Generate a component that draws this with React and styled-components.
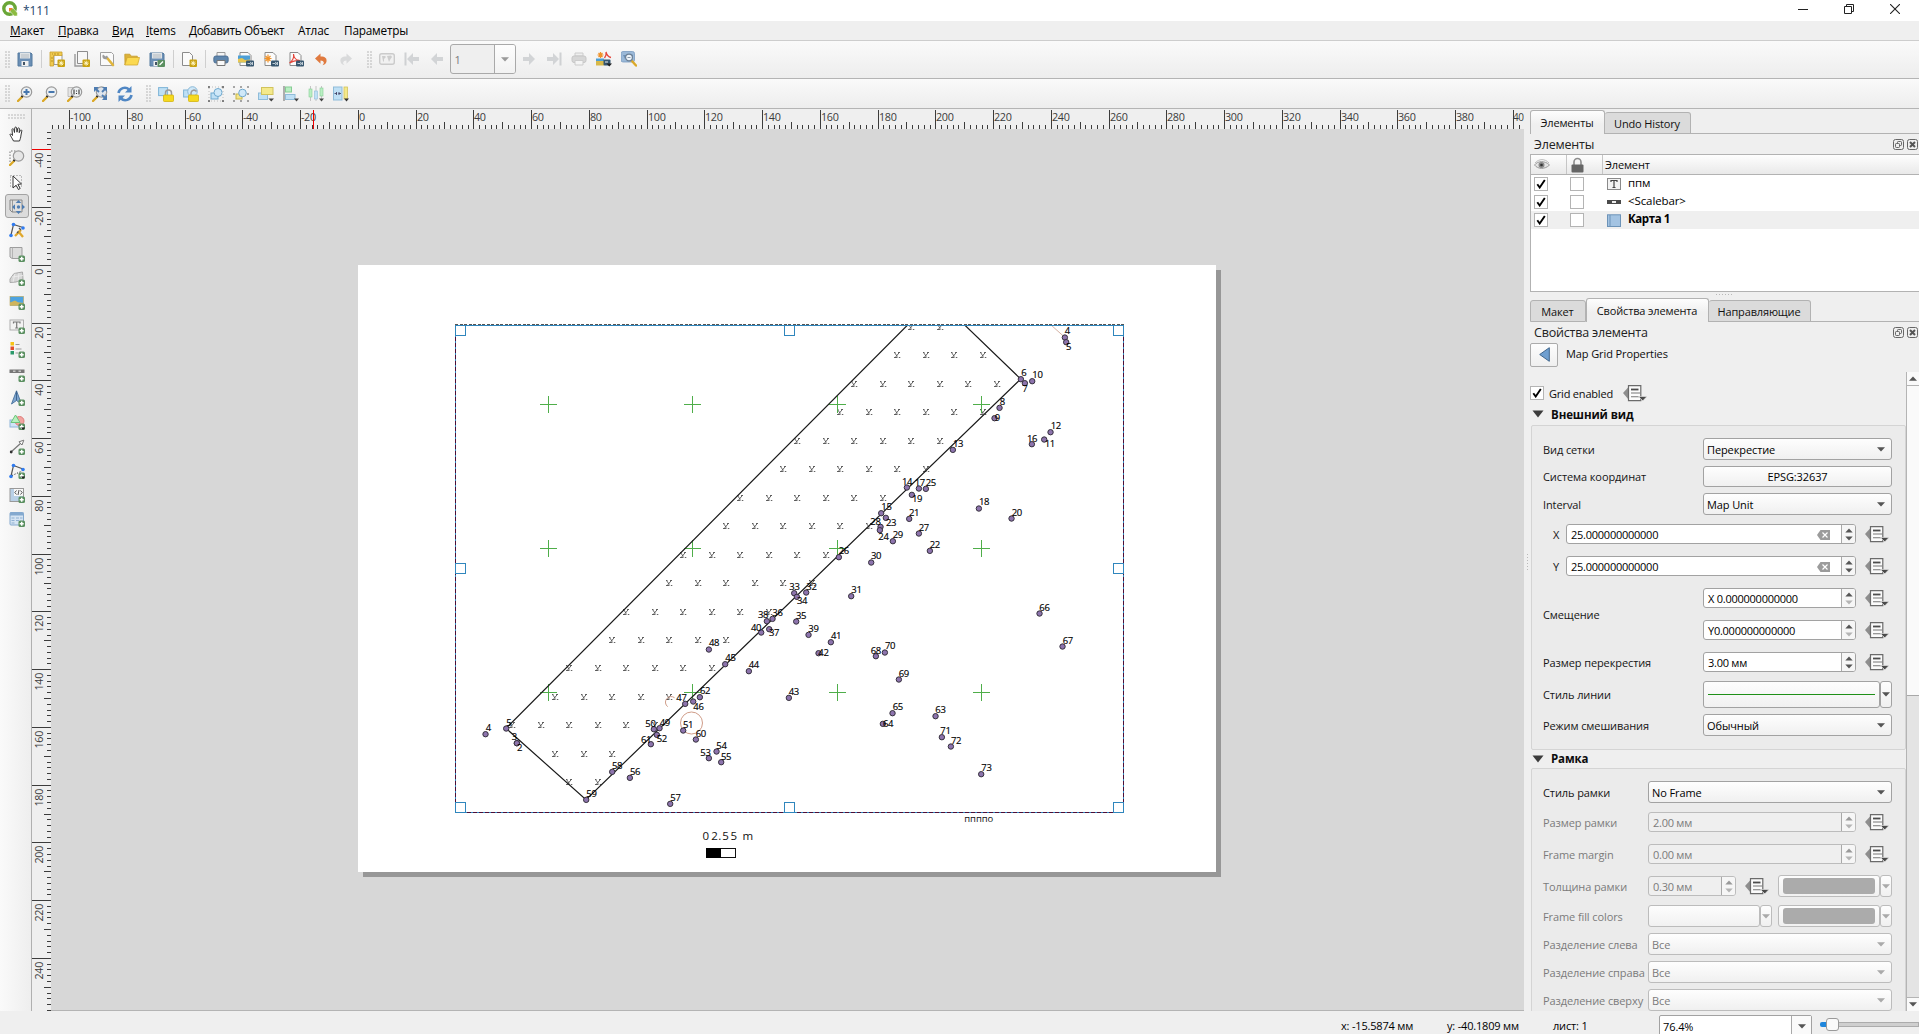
import React from "react";
import styled, { createGlobalStyle, css } from "styled-components";

const Global = createGlobalStyle`
  * { box-sizing: border-box; }
  html, body { margin: 0; padding: 0; overflow: hidden; background: #efefef; }
  body { font-family: "Open Sans", "Noto Sans", sans-serif; font-size: 11px; letter-spacing: -0.1px; color: #0c0c0c; }
  svg { display: block; flex: none; }
`;

/* ---------- window frame ---------- */
const Window = styled.div`
  width: 1919px; height: 1034px; display: flex; flex-direction: column; overflow: hidden; background: #efefef;
`;
const TitleBar = styled.header`
  height: 21px; flex: none; display: flex; align-items: flex-start; background: #fff; padding-left: 2px;
`;
const TitleText = styled.span`
  flex: 1; margin-left: 5px; font-size: 12px; line-height: 16px; padding-top: 3px; letter-spacing: -0.1px; color: #24466a;
`;
const Caption = styled.div`
  display: flex; gap: 0; padding-right: 1px;
`;
const CaptionButton = styled.div`
  width: 46px; height: 17px; display: flex; align-items: center; justify-content: center;
`;
const MenuBar = styled.nav`
  height: 20px; flex: none; display: flex; padding-left: 10px; gap: 14px; border-bottom: 1px solid #cdcdcd;
  font-size: 11.8px; line-height: 19px; letter-spacing: -0.15px; color: #000;
`;
const MenuItem = styled.span`
  width: ${(p) => p.$w}px; white-space: nowrap; letter-spacing: ${(p) => p.$ls ?? -0.2}px;
  &::first-letter { text-decoration: ${(p) => (p.$u ? "underline" : "none")}; }
`;
const ToolBar = styled.div`
  height: ${(p) => p.$h}px; flex: none; display: flex; align-items: center; padding: 0 0 ${(p) => p.$pb || 0}px 4px;
  background: linear-gradient(#fafafa, #ededed); border-bottom: 1px solid #b4b4b4;
`;
const Tool = styled.div`
  width: 25px; height: 24px; display: flex; align-items: center; justify-content: center;
`;
const Separator = styled.div`
  width: 7px; height: 18px; display: flex; justify-content: center;
  &::before { content: ""; width: 1px; background: #cfcfcf; }
`;
const Grip = styled.div`
  width: ${(p) => p.$w}px; height: 17px; flex: none; display: flex; justify-content: ${(p) => (p.$end ? "center" : "flex-start")};
  padding-left: ${(p) => (p.$end ? 5 : 1)}px;
  &::before {
    content: ""; width: 5px;
    background: radial-gradient(circle at 1px 1px, #c6c6c6 0.6px, transparent 0.9px) 0 0 / 3px 3px;
  }
`;
const PageCombo = styled.div`
  width: 66px; height: 30px; margin-right: 1px; display: flex; border: 1px solid #a9a9a9; border-radius: 3px; overflow: hidden;
  background: #efefef; color: #7a7a7a; font-size: 11px; line-height: 30px;
`;
const PageComboValue = styled.div`
  flex: 1; padding-left: 4px; border-right: 1px solid #a9a9a9;
`;
const PageComboArrow = styled.div`
  width: 20px; background: linear-gradient(#fdfdfd, #f2f2f2); display: flex; align-items: center; justify-content: center;
`;

const Body = styled.main`
  flex: 1; min-height: 0; display: flex;
`;
const ToolBox = styled.aside`
  width: 32px; flex: none; display: flex; flex-direction: column; align-items: center; padding: 5px 0 0 2px;
  background: linear-gradient(90deg, #fafafa, #eeeeee); border-right: 1px solid #b0b0b0;
`;
const SideGrip = styled.div`
  width: 17px; height: 5px; margin-bottom: 2.5px;
  background: radial-gradient(circle at 1px 1px, #c6c6c6 0.6px, transparent 0.9px) 0 0 / 3px 3px;
`;
const SideTool = styled.div`
  width: 24px; height: 24.08px; flex: none; padding: 1px 0; display: flex; align-items: center; justify-content: center;
  ${(p) => p.$on && css`
    border: 1px solid #a3a3a3; border-radius: 3px; background: #dcdcdc; padding: 0;
  `}
`;
const Stage = styled.section`
  width: 1492px; flex: none; display: grid; grid-template-columns: 19px 1473px; grid-template-rows: 20px 1fr;
`;
const Corner = styled.div` background: #efefef; `;
const Canvas = styled.div`
  background: #d7d7d7; padding: 136px 0 0 307px; overflow: hidden; border-bottom: 1px solid #b4b4b4;
`;
const Paper = styled.div`
  width: 858px; height: 607px; background: #fff; box-shadow: 5px 5px 0 #979797;
`;

/* ---------- right dock ---------- */
const DockHandle = styled.div`
  width: 6px; flex: none; display: flex; align-items: flex-start; padding: 445px 0 0 3px;
  &::before { content: ""; width: 1px; height: 17px; background: repeating-linear-gradient(#b9b9b9 0 1px, transparent 1px 3px); }
`;
const Dock = styled.aside`
  flex: 1; min-width: 0; display: flex; flex-direction: column;
`;
const Tabs = styled.div`
  height: ${(p) => p.$h}px; flex: none; display: flex; align-items: flex-end; margin-top: ${(p) => p.$mt}px;
  &::after { content: ""; flex: 1; border-bottom: 1px solid #b2b2b2; }
`;
const Tab = styled.div`
  width: ${(p) => p.$w}px; height: ${(p) => (p.$on ? "100%" : "calc(100% - 2px)")};
  border: 1px solid #b2b2b2; border-radius: 3px 3px 0 0; display: flex; align-items: center; justify-content: center;
  background: #dbdbdb; white-space: nowrap; color: #111; letter-spacing: -0.15px; padding-right: 1px;
  border-left-width: ${(p) => (p.$first ? 1 : 0)}px;
  ${(p) => p.$on && css`
    background: linear-gradient(#fdfdfd, #efefef 60%); border-bottom: 0; border-left-width: 1px;
  `}
`;
const DockTitle = styled.div`
  height: ${(p) => p.$h}px; flex: none; display: flex; align-items: center; padding: 0 1px 0 4px; gap: 3px;
  font-size: 12.5px; letter-spacing: ${(p) => p.$ls}px; color: #222;
`;
const Grow = styled.span` flex: 1; white-space: nowrap; padding-top: 1px; `;
const Table = styled.div`
  height: 138px; flex: none; background: #fff; border: 1px solid #b2b2b2; border-right: 0;
`;
const TableHead = styled.div`
  height: 20px; display: grid; grid-template-columns: 36px 36px 1fr; background: linear-gradient(#fefefe, #e9e9e9);
  border-bottom: 1px solid #b2b2b2; letter-spacing: -0.15px;
`;
const HeadCell = styled.div`
  border-right: ${(p) => (p.$last ? 0 : 1)}px solid #c6c6c6; padding-left: ${(p) => p.$pl}px; display: flex; align-items: center;
`;
const ItemRow = styled.div`
  height: 18px; display: grid; grid-template-columns: 36px 37px 21px 1fr; align-items: center; padding-left: 3px;
  background: ${(p) => (p.$on ? "#efefef" : "#fff")}; font-weight: ${(p) => (p.$on ? 700 : 400)};
  font-size: 11.5px; letter-spacing: ${(p) => (p.$on ? -0.4 : -0.1)}px; color: #000;
`;
const ItemName = styled.span` padding-bottom: 3px; line-height: 15px; `;
const Box = styled.span`
  width: 14px; height: 14px; flex: none; border: 1px solid #b4b4b4; background: #fff; display: flex; align-items: center; justify-content: center;
`;
const Splitter = styled.div`
  height: 7px; flex: none; display: flex; justify-content: center; align-items: flex-start; padding-top: 2px;
  &::before { content: ""; width: 17px; height: 1px; background: repeating-linear-gradient(90deg, #b9b9b9 0 1px, transparent 1px 3px); }
`;
const BackRow = styled.div`
  height: 25px; flex: none; display: flex; align-items: center; gap: 8px;
`;
const BackText = styled.span` padding-bottom: 2px; `;
const BackButton = styled.div`
  width: 28px; height: 24px; border: 1px solid #ababab; border-radius: 2px; background: linear-gradient(#fdfdfd, #efefef);
  display: flex; align-items: center; justify-content: center;
`;
const ScrollArea = styled.div`
  flex: 1; min-height: 0; display: flex; margin-top: 5px;
`;
const Scrolled = styled.div`
  width: 376px; flex: none; overflow: hidden; padding-top: 13px;
`;
const CheckLine = styled.div`
  height: 16px; display: flex; align-items: center;
`;
const CheckText = styled.span` width: 75px; margin-left: 4px; padding-left: 1px; letter-spacing: -0.2px; `;
const GroupHead = styled.div`
  height: ${(p) => p.$h}px; display: flex; align-items: center; gap: 7px; padding: ${(p) => p.$pt || 0}px 0 ${(p) => p.$pb || 0}px 2px;
  font-weight: 700; font-size: 11.5px; letter-spacing: -0.1px;
`;
const Group = styled.div`
  width: 375px; margin-left: 1px; border: 1px solid #d4d4d4; border-radius: 2px; background: #ebebeb;
  height: ${(p) => p.$h}px; padding: 12px 13px 0 11px;
`;
const Row = styled.div`
  height: ${(p) => p.$h}px; margin-bottom: ${(p) => p.$mb || 0}px; display: flex; align-items: center;
  color: ${(p) => (p.$off ? "#7b7b7b" : "#151515")};
`;
const Label = styled.label`
  width: ${(p) => p.$w}px; padding-left: ${(p) => p.$pl || 0}px; padding-top: ${(p) => p.$pt ?? 1}px; flex: none; white-space: nowrap; letter-spacing: -0.1px;
`;
const frame = css`
  height: ${(p) => p.$h || 22}px; width: ${(p) => p.$w}px; flex: none; border: 1px solid ${(p) => (p.$off ? "#bcbcbc" : "#a2a2a2")}; border-radius: 3px;
`;
const Combo = styled.div`
  ${frame}
  background: linear-gradient(#fefefe, #f0f0f0); display: flex; align-items: center; justify-content: space-between;
  padding: 1px 6px 0 3px; color: ${(p) => (p.$off ? "#7b7b7b" : "#000")};
`;
const Button = styled(Combo)` justify-content: center; padding: 0; `;
const SpinFrame = styled.div`
  ${frame}
  height: 20px; display: flex; background: ${(p) => (p.$off ? "#efefef" : "#fff")}; overflow: hidden; color: ${(p) => (p.$off ? "#7b7b7b" : "#000")};
`;
const SpinValue = styled.div`
  flex: 1; display: flex; align-items: center; justify-content: space-between; padding: 1px 11px 0 4px; letter-spacing: -0.25px; line-height: 17px;
`;
const SpinArrows = styled.div`
  width: 14px; border-left: 1px solid #a9a9a9; background: #f6f6f6; display: flex; align-items: center; justify-content: center;
`;
const Push = styled.span` width: ${(p) => p.$w}px; flex: none; `;
const Stack = styled.div` display: flex; flex-direction: column; gap: 12px; `;
const Line = styled.div` display: flex; align-items: center; `;
const Swatch = styled.div`
  ${frame}
  background: linear-gradient(#fdfdfd, #f1f1f1); display: flex; align-items: center; justify-content: center;
`;
const SwatchFill = styled.div`
  width: 92px; height: 16px; border-radius: 3px; background: #ababab;
`;
const GreenLine = styled.div` width: 167px; height: 1px; background: #1f9018; `;
const Drop = styled.div`
  ${frame}
  background: linear-gradient(#fefefe, #f0f0f0); display: flex; align-items: center; justify-content: center;
`;
const Scrollbar = styled.div`
  flex: 1; display: flex; flex-direction: column; background: #e4e4e4; border-left: 1px solid #b4b4b4;
`;
const ScrollStep = styled.div`
  height: 14px; flex: none; background: #fafafa; border-top: ${(p) => (p.$bottom ? 1 : 0)}px solid #b4b4b4;
  border-bottom: ${(p) => (p.$bottom ? 0 : 1)}px solid #b4b4b4; display: flex; align-items: center; justify-content: center;
`;
const ScrollThumb = styled.div` height: 310px; background: #fafafa; border-bottom: 1px solid #a8a8a8; `;
const ScrollTrack = styled.div` flex: 1; `;

/* ---------- status bar ---------- */
const StatusBar = styled.footer`
  height: 23px; flex: none; display: flex; align-items: flex-start; padding-left: 1341px; font-size: 11px; color: #000;
`;
const Status = styled.span` width: ${(p) => p.$w}px; padding-top: 7px; line-height: 15px; letter-spacing: -0.18px; white-space: nowrap; `;
const ZoomBox = styled.div`
  width: 153px; height: 22px; margin-top: 4px; border: 1px solid #a2a2a2; border-radius: 2px; background: #fff; display: flex; align-items: center;
`;
const ZoomValue = styled.span` flex: 1; padding-left: 3px; letter-spacing: -0.1px; `;
const ZoomArrow = styled.span`
  width: 20px; height: 100%; border-left: 1px solid #a9a9a9; display: flex; align-items: center; justify-content: center; background: #fafafa;
`;
const Slider = styled.div`
  flex: 1; margin: 11px 0 0 8px; height: 4px; display: flex; align-items: center;
`;
const SliderDone = styled.div` width: 6px; height: 5px; background: #1f86dc; border-radius: 2px 0 0 2px; `;
const SliderKnob = styled.div` width: 13px; height: 13px; flex: none; border: 1px solid #9a9a9a; border-radius: 3px; background: #fafafa; `;
const SliderRest = styled.div` flex: 1; height: 5px; background: #cfcfcf; border: 1px solid #acacac; border-left: 0; `;

/* ---------- icons ---------- */
const I = ({ s = 16, h, children }) => (
  <svg width={s} height={h || s} viewBox={`0 0 ${s} ${h || s}`} fill="none">{children}</svg>
);
const Down = ({ c = "#555", w = 8 }) => (
  <svg width={w} height="5" viewBox="0 0 8 5"><path d="M0 .3h8L4 4.6z" fill={c} /></svg>
);
const Gold = () => (
  <g><rect x="8.5" y="8.500" width="7.500" height="7.500" rx="1" fill="#c9a312" /><path d="M12.200 9.700v5M9.700 12.200h5M10.500 10.500l3.500 3.500M14 10.500l-3.500 3.500" stroke="#fff7c9" strokeWidth=".9" /></g>
);
const Exp = () => (
  <g><rect x="8" y="9.500" width="8" height="6" rx="1" fill="#37566f" /><path d="M9.500 12.500h3M12 11l2 1.500-2 1.500M14.500 11v3" stroke="#dfe8ee" strokeWidth=".8" /></g>
);
const Sheet = ({ x = 2, w = 11, h = 13 }) => (
  <path d={`M${x} 1.500h${w - 3}l3 3v${h - 3}h-${w}z`} fill="#fbfbfb" stroke="#8b8b8b" />
);
const Plus = () => (
  <g><rect x="9.500" y="9.500" width="6.500" height="6.500" rx="1.500" fill="#5a8f60" /><path d="M12.700 10.800v4M10.700 12.800h4" stroke="#fff" strokeWidth="1.500" /></g>
);
const Lens = ({ children, c = "#9a9a9a", f = "#eef1f3" }) => (
  <g><path d="M1 15l4.500-4.500" stroke="#dba928" strokeWidth="2.400" strokeLinecap="round" /><path d="M4.500 11l1.500-1.500" stroke="#222" strokeWidth="2" /><circle cx="9.500" cy="6" r="5.200" fill={f} stroke={c} strokeWidth="1.200" />{children}</g>
);
const Save = () => (
  <g><path d="M1 2h13l1 1v12H1z" fill="#6b8fb5" stroke="#557a9f" /><rect x="3" y="2" width="10" height="5.500" fill="#dfe3e6" /><path d="M4 4h8M4 6h8" stroke="#a9b2b9" strokeWidth=".8" /><rect x="4.500" y="10" width="7" height="5" fill="#f0f0f0" /><rect x="6" y="11" width="2" height="3" fill="#456" /></g>
);

const tools1 = {
  save: <I><Save /></I>,
  newLayout: <I><path d="M5 3.500h8v10H5z" fill="#fafafa" stroke="#999" /><path d="M1 1h12v3.500H4.500V15H1z" fill="#f0ca4f" stroke="#c9a02c" strokeWidth=".8" /><path d="M3 3h1M6 2v2M9 2v2M2 7h2M2 10h2" stroke="#a17b12" strokeWidth=".7" /><Gold /></I>,
  duplicate: <I><path d="M3.500 .5h10v12h-10z" fill="#f7f7f7" stroke="#8d8d8d" /><path d="M1 3v12h10" stroke="#9a9a9a" strokeWidth="1.400" /><Gold /></I>,
  manager: <I><path d="M1.500 1.500h11l2 2v11h-13z" fill="#fafafa" stroke="#a0a0a0" /><path d="M4 3.500a3 3 0 0 0 1 4.500l3 .6L9.500 7 8 4.500 6.500 5.500z" fill="#9b9b9b" /><path d="M9 8l5 6" stroke="#e0b53c" strokeWidth="2.600" strokeLinecap="round" /></I>,
  open: <I><path d="M.8 3.200h5l1.500 2h6v2H3L1 14z" fill="#dcb13a" stroke="#c59a25" strokeWidth=".8" /><path d="M3.200 6.500h12.300L13.500 14H.9z" fill="#fbd950" stroke="#d3aa31" strokeWidth=".8" /></I>,
  saveTpl: <I><Save /><rect x="8.500" y="9" width="7.500" height="7" rx="1" fill="#5a8f60" /><path d="M10.500 14l3.500-3.500" stroke="#fff" strokeWidth="1.300" /></I>,
  addPage: <I><Sheet x={1.5} w={10} h={13} /><Gold /></I>,
  print: <I><path d="M4 1.500h8v4H4z" fill="#f4f4f4" stroke="#999" /><rect x=".8" y="5" width="14.400" height="7" rx="2" fill="#5f86ad" stroke="#43658a" strokeWidth=".8" /><path d="M4 9.500h8v5H4z" fill="#fafafa" stroke="#777" /></I>,
  image: <I><Sheet /><rect x="0" y="4.500" width="12" height="7" fill="#4d9fd6" /><path d="M0 11.500V8l4-1 3 2 5-.5v3z" fill="#e8c650" /><Exp /></I>,
  svg: <I><Sheet /><path d="M5 3.500v8M1.500 7.500h7M2.500 5l5 5M7.500 5l-5 5" stroke="#f0932b" strokeWidth="1.200" /><Exp /></I>,
  pdf: <I><Sheet /><path d="M1.500 12c3-2 4.500-5.500 4-9 .5 4 3 6.500 6.500 6.500-4-.5-7 .5-10.500 2.500z" stroke="#e5453a" strokeWidth="1.100" /><Exp /></I>,
  undo: <I><path d="M2 7.500L7.500 2.500v3c5 0 6.500 2 6 5-.4 2-2 3.500-4 3.800 2-1.800 2-4.500-2-4.800v3.200z" fill="#e07a3f" /></I>,
  redo: <I><path d="M14 7.500L8.500 2.500v3c-5 0-6.500 2-6 5 .4 2 2 3.500 4 3.800-2-1.800-2-4.500 2-4.800v3.200z" fill="#d9dadb" /></I>,
};
const tools2 = {
  preview: <I><rect x=".7" y="2.700" width="14.600" height="10.600" rx="2" fill="#f1f1f1" stroke="#cbcbcb" strokeWidth="1.400" /><path d="M3 5h3l1 1-2 2v3l-1-1zM8 5l4-.5 1 1.500-1.500 2L10 11l-1-3z" fill="#cdcdcd" /></I>,
  first: <I><path d="M1.500 1.500v13" stroke="#cfd1d3" strokeWidth="2" /><path d="M3 8l6-6v4h6v4H9v4z" fill="#d2d4d6" /></I>,
  prev: <I><path d="M2 8l6-6v4h6v4H8v4z" fill="#d2d4d6" /></I>,
};
const tools3 = {
  next: <I><path d="M14 8L8 2v4H2v4h6v4z" fill="#d2d4d6" /></I>,
  last: <I><path d="M14.500 1.500v13" stroke="#cfd1d3" strokeWidth="2" /><path d="M13 8L7 2v4H1v4h6v4z" fill="#d2d4d6" /></I>,
  printOff: <I><path d="M4 2h8v3H4z" fill="#eee" stroke="#ccc" /><rect x="1" y="5" width="14" height="6.500" rx="2" fill="#d6d6d6" stroke="#c6c6c6" /><path d="M4 9.500h8v4.500H4z" fill="#f4f4f4" stroke="#ccc" /></I>,
  atlasExp: <I><path d="M4.500 1v6M1.500 4h6M2.500 2l4 4M6.500 2l-4 4" stroke="#f0932b" strokeWidth="1.200" /><path d="M8.500 7c1.500-2 2-4 1.500-6 .8 3 2.500 5 5 5.500" stroke="#e5453a" strokeWidth="1.300" /><rect x="0" y="7.500" width="8" height="3" fill="#4d9fd6" /><path d="M0 10h8v4.500H0z" fill="#d8b94a" /><rect x="7.500" y="8.500" width="7" height="6" rx="1" fill="#37566f" /><path d="M10.500 12.500h5.500l-2.700 3z" fill="#222" /><path d="M9 11h3" stroke="#eee" /></I>,
  atlasSet: <I><rect x="0" y=".5" width="13.500" height="10.500" rx="2" fill="#9bb9d8" stroke="#7a9bc0" strokeWidth=".8" /><path d="M2 4h3l-1 4zM10 3l2 1v3" fill="#6c8fb6" /><path d="M10.500 9.500l4.500 5" stroke="#dba928" strokeWidth="2.400" strokeLinecap="round" /><circle cx="8" cy="6.500" r="3.400" fill="#eef4fa" stroke="#6b7f94" strokeWidth="1.200" /><path d="M6.500 6.500h3" stroke="#89a" /></I>,
};
const nodes = [[1, 1], [15, 1], [1, 15], [15, 15]];
const zoomTools = {
  zin: <I><Lens><path d="M9.500 3v6M6.500 6h6" stroke="#4677ae" strokeWidth="2" /></Lens></I>,
  zout: <I><Lens><path d="M6.500 6h6" stroke="#4677ae" strokeWidth="2" /></Lens></I>,
  z1: <I><path d="M1 1.500h7v9H1z" fill="#e5e5e5" stroke="#a9a9a9" strokeWidth=".7" /><Lens><path d="M7 3.500v5M9.500 4.500v1M9.500 7v1M12 3.500v5" stroke="#333" strokeWidth="1.100" /></Lens></I>,
  full: <I><Lens f="#dfe5ec" /><path d="M2 6V1h5zM10 1h5v5zM15 8v6h-5z" fill="#4f7db2" /><path d="M3 2l4 4M14 2l-4 4M14 13l-4-4" stroke="#4f7db2" strokeWidth="1.800" /></I>,
  refresh: <I><path d="M1.500 7a6.300 6.300 0 0 1 10.500-3.500" stroke="#5087c4" strokeWidth="2.600" /><path d="M14.500 0v6.500H8z" fill="#5087c4" /><path d="M14.500 9A6.300 6.300 0 0 1 4 12.500" stroke="#5087c4" strokeWidth="2.600" /><path d="M1.500 16V9.500H8z" fill="#5087c4" /></I>,
};
const Lock = ({ open }) => (
  <g><path d={open ? "M8 9V7a3 3 0 0 1 5.500-1.500" : "M7.500 9V7a3 3 0 0 1 6 0v2"} stroke="#9b9b9b" strokeWidth="1.500" /><rect x="5.500" y="9" width="10" height="6.500" rx=".8" fill="#f5d91f" stroke="#d3b40e" strokeWidth=".8" /></g>
);
const arrangeTools = {
  lock: <I><rect x=".6" y="1.600" width="9" height="8" fill="#bfe0f5" stroke="#7fb4d8" /><Lock /></I>,
  unlock: <I><rect x=".6" y="4" width="8" height="7" fill="#bfe0f5" stroke="#7fb4d8" /><circle cx="9.500" cy="5.500" r="4.800" fill="#cfe8f8" stroke="#8ab8d6" /><Lock open /></I>,
  group: <I><rect x="3" y="7" width="7" height="6" fill="#bfe0f5" stroke="#6fa9cf" /><circle cx="10" cy="6.500" r="4" fill="#cfe8f8" stroke="#6fa9cf" />{nodes.map(([x, y]) => <circle key={x + "" + y} cx={x} cy={y} r="1" fill="#555" />)}<path d="M1 1h14v14H1z" stroke="#999" strokeWidth=".6" strokeDasharray="1 2" /></I>,
  ungroup: <I><rect x="3" y="8" width="6" height="5" fill="#f3e58a" stroke="#c9b748" /><circle cx="9.500" cy="7" r="3.800" fill="#cfe8f8" stroke="#6fa9cf" />{nodes.concat([[8, 1], [1, 8], [15, 8], [8, 15]]).map(([x, y]) => <rect key={x + "-" + y} x={x - 0.7} y={y - 0.7} width="1.400" height="1.400" fill="#555" />)}</I>,
  raise: <I><rect x=".5" y="7" width="9" height="6.500" fill="#bfe0f5" stroke="#8fbcd9" /><rect x="3.500" y="1.500" width="11.500" height="7" fill="#f4e98b" stroke="#d1c35c" /><path d="M10.500 12.500h5.500l-2.700 3z" fill="#444" /></I>,
  align: <I><path d="M1 0v15" stroke="#888" strokeWidth="1.300" /><rect x="2.500" y="1" width="6" height="5" fill="#b9efc3" stroke="#86cc94" /><rect x="2.500" y="8.500" width="9.500" height="5" fill="#bfe0f5" stroke="#8fbcd9" /><path d="M11 12.500h5l-2.500 3z" fill="#444" /></I>,
  distribute: <I><path d="M2.500 0v15M8 0v15M13.500 0v15" stroke="#b9b9b9" strokeWidth=".8" /><rect x="1" y="3" width="3" height="8" fill="#b9efc3" stroke="#86cc94" strokeWidth=".6" /><rect x="6.500" y="5" width="3" height="8" fill="#bfe0f5" stroke="#8fbcd9" strokeWidth=".6" /><rect x="12" y="2" width="3" height="8" fill="#b9efc3" stroke="#86cc94" strokeWidth=".6" /><path d="M11 12.500h5l-2.500 3z" fill="#444" /></I>,
  resize: <I><rect x=".5" y="1" width="8.500" height="13" fill="#bfe0f5" stroke="#8fbcd9" /><rect x="11" y="1" width="3.500" height="12" fill="#f4e98b" stroke="#d1c35c" strokeWidth=".8" /><path d="M1.500 7.500h2.500M5.500 7.500h2.500M3.500 6v3M6 6v3" stroke="#446" strokeWidth=".9" /><path d="M11 12.500h5l-2.500 3z" fill="#333" /></I>,
};
const sideTools = [
  <I><path d="M4.500 15C3 12 1.500 10 1 8.500c.5-1 1.500-.5 2.500 1L3 3.500c.3-1.200 1.500-1 1.800 0l.7 3L5.700 2c.3-1.300 1.700-1.300 1.900 0L8 6.200 8.700 2.500c.4-1 1.600-.8 1.700.2l-.2 4 1.200-2.400c.6-.8 1.700-.2 1.400.8L12 9c-.3 3-.8 4-1.500 6z" fill="#fff" stroke="#222" strokeWidth=".9" /></I>,
  <I><path d="M1 12V1h7" stroke="#777" strokeDasharray="1.500 1.500" /><Lens f="#e6e6e6" /></I>,
  <I><path d="M1.500 1.500h11v11h-11z" stroke="#888" strokeDasharray="1 2" /><path d="M4 2l8.500 8-3.700.3 2.400 4.200-1.800 1-2.300-4.300L4 14z" fill="#fff" stroke="#222" strokeWidth=".9" /></I>,
  <I><path d="M1 2h12v12H3L1 12z" fill="#dfdfdf" stroke="#888" /><path d="M3.500 2v12" stroke="#888" strokeWidth=".8" /><path d="M9.500 2l2.800 3H6.700zM9.500 16l2.800-3H6.700zM3 9l3-2.700v5.400zM16 9l-3-2.700v5.400z" fill="#4f7db2" /><circle cx="9.500" cy="9" r="1.700" fill="#4f7db2" /></I>,
  <I><path d="M2 13L4.500 2.500 14 5.500" stroke="#555" strokeWidth="1.200" /><circle cx="2" cy="13.500" r="1.800" fill="#2f7bf0" /><circle cx="4.500" cy="2.500" r="1.800" fill="#2f7bf0" /><circle cx="14" cy="6" r="1.800" fill="#2f7bf0" /><path d="M6 14l6-6M9 9l5 6" stroke="#e0a82c" strokeWidth="2.300" /><path d="M10 6l2 2M8 11l1.500-1.500" stroke="#555" strokeWidth="1.300" /></I>,
  <I><path d="M1 1.500h12v11H3L1 11z" fill="#dcdcdc" stroke="#9d9d9d" /><path d="M3.500 1.500v11" stroke="#aaa" strokeWidth=".8" /><Plus /></I>,
  <I><path d="M1 9l4-5.500L13.500 2 14 9l-7 3-6 .5z" fill="#d6d6d6" stroke="#a9a9a9" /><path d="M3 7l11-1.500M6 3.500L4 12M10 3l-1 8" stroke="#efefef" strokeWidth=".8" /><Plus /></I>,
  <I><rect x="1" y="2.500" width="13.500" height="9" fill="#4da3e0" stroke="#b5a25a" strokeWidth=".6" /><path d="M1 11.500V8.500l5-2 3 1.800 5.500.7v2.500z" fill="#cfb55c" /><Plus /></I>,
  <I><rect x="1" y="2" width="13.500" height="10" fill="#f2f2f2" stroke="#a8a8a8" strokeWidth=".9" /><path d="M4.500 5.500V4h6.500v1.500M7.700 4v6M6.200 10h3" stroke="#777" strokeWidth="1.200" /><Plus /></I>,
  <I><rect x="1.500" y="0" width="3.500" height="3.500" fill="#f7c416" /><rect x="1.500" y="4.500" width="3.500" height="3.500" fill="#e2502d" /><rect x="1.500" y="9" width="3.500" height="3.500" fill="#2b9a6b" /><path d="M6.500 2.500h4M6.500 7h6M6.500 11h2.500" stroke="#999" /><Plus /></I>,
  <I><rect x=".5" y="3.500" width="15" height="3.500" fill="#777" /><path d="M4 5.300h2.500M9.500 5.300H12" stroke="#c6c6c6" strokeWidth="1.600" /><Plus /></I>,
  <I><path d="M7.500 .8L12.500 14l-5-3.500L2.500 14z" fill="#7ea5cf" stroke="#456f9c" strokeWidth=".9" /><path d="M7.500 1v9.500" stroke="#3e6590" /><Plus /></I>,
  <I><rect x="1" y="6" width="9" height="7" fill="#cfe4f7" stroke="#90b6da" /><circle cx="10.500" cy="7" r="4.500" fill="#f2a3a0" stroke="#de7d7a" /><path d="M6.500 1L11 8.500H2z" fill="#b6f0bd" stroke="#6cc47a" /><Plus /><path d="M12 13.500h4.500L14 16z" fill="#222" /></I>,
  <I><path d="M2 13L12 4" stroke="#777" strokeWidth="1.200" /><path d="M14.800 1.200L13 6l-3-3.200z" fill="#fff" stroke="#777" /><circle cx="2.200" cy="13" r="1.400" fill="#333" /><Plus /></I>,
  <I><path d="M2 13L4.500 2.500 14 6" stroke="#555" strokeWidth="1.200" /><path d="M3 12.500L13 8" stroke="#333" strokeDasharray="1.200 1.500" /><circle cx="2" cy="13.500" r="1.800" fill="#2f7bf0" /><circle cx="4.500" cy="2.500" r="1.800" fill="#2f7bf0" /><circle cx="14" cy="6.500" r="1.800" fill="#2f7bf0" /><Plus /><path d="M12 13.500h4.500L14 16z" fill="#222" /></I>,
  <I><rect x="1" y="1.500" width="13.500" height="13" fill="#b9d0e6" stroke="#999" /><rect x="5" y="2" width="9" height="7" fill="#f7f7f7" /><path d="M7.500 3.500L5.800 5.500l1.700 2M11.500 3.500l1.700 2-1.700 2M10 3L9 8" stroke="#444" strokeWidth=".9" /><Plus /></I>,
  <I><rect x="1" y="1.500" width="13.500" height="12.500" rx="1" fill="#d5e4f3" stroke="#84a9cf" /><rect x="1" y="1.500" width="13.500" height="3" fill="#84a9cf" /><path d="M2.500 7h3M7 7h3M11 7h2.500M2.500 9.500h3M7 9.500h3M2.500 12h3" stroke="#8fb0d2" strokeWidth="1.200" /><Plus /></I>,
];
const Override = () => (
  <svg width="24" height="17" viewBox="0 0 24 17" fill="none">
    <path d="M5.500 2v12.500L0 8z" fill="#8e8e8e" />
    <path d="M5.500 .7h12.300v15H5.500z" fill="#fbfbfb" stroke="#6b6b6b" strokeWidth="1.200" />
    <path d="M8 4.500h7.500" stroke="#4d4d4d" strokeWidth="1.800" /><path d="M8 8h9M8 11.800h8" stroke="#777" strokeWidth="1.100" />
    <path d="M15.500 11.500H24l-4.200 4.300z" fill="#4a4a4a" stroke="#ececec" strokeWidth=".6" />
  </svg>
);
const Clear = () => (
  <svg width="13" height="10" viewBox="0 0 13 10"><path d="M0 5L3.500 0H13v10H3.500z" fill="#9b9b9b" /><path d="M5.500 2.500l5 5M10.500 2.500l-5 5" stroke="#fff" strokeWidth="1.200" /></svg>
);
const Check = () => (
  <svg width="10" height="10" viewBox="0 0 10 10" fill="none"><path d="M1.300 5.200L3.700 8.500 8.800 1" stroke="#000" strokeWidth="1.900" /></svg>
);
const Float = () => (
  <svg width="11" height="11" viewBox="0 0 11 11" fill="none"><rect x=".5" y=".5" width="10" height="10" rx="2" stroke="#666" /><rect x="4.500" y="2.500" width="4" height="4" rx=".8" stroke="#666" /><rect x="2.500" y="4.500" width="4" height="4" rx=".8" fill="#efefef" stroke="#666" /></svg>
);
const CloseIcon = () => (
  <svg width="11" height="11" viewBox="0 0 11 11" fill="none"><rect x=".5" y=".5" width="10" height="10" rx="2" stroke="#666" /><path d="M3 3l5 5M8 3l-5 5" stroke="#555" strokeWidth="2" /></svg>
);
const Fold = () => (
  <svg width="12" height="8" viewBox="0 0 12 8"><path d="M.5 .5h11L6 7.500z" fill="#3c3c3c" /></svg>
);

/* ---------- rulers ---------- */
const MM = 2.8875;
const X0 = 358.3;
const Y0 = 265.4;
const range = (a, b, s) => Array.from({ length: Math.floor((b - a) / s) + 1 }, (_, i) => a + i * s);
const rulerFont = { fontSize: 10.8, fill: "#3c3c3c", fontFamily: "Open Sans, sans-serif", letterSpacing: -0.35 };

const HRuler = () => (
  <svg width="1473" height="20" viewBox="51 109 1473 20" shapeRendering="crispEdges">
    <rect x="51" y="109" width="1473" height="20" fill="#efefef" />
    {range(-106, 402, 2).map((m) => {
      const len = m % 20 === 0 ? 19 : m % 10 === 0 ? 7 : 4;
      return <rect key={m} x={Math.floor(X0 + m * MM)} y={129 - len} width="1" height={len} fill="#3c3c3c" />;
    })}
    {range(-100, 380, 20).map((m) => (
      <text key={m} x={Math.floor(X0 + m * MM) + 1} y="120.500" {...rulerFont}>{m}</text>
    ))}
    {/* the last label is out of room: only its first two digits show */}
    <text x="1513" y="120.500" {...rulerFont} fontSize={10} letterSpacing={-0.4}>40</text>
    <rect x="313" y="110" width="1" height="19" fill="#f00000" />
  </svg>
);
const VRuler = () => (
  <svg width="19" height="882" viewBox="32 129 19 882" shapeRendering="crispEdges">
    <rect x="32" y="129" width="19" height="882" fill="#efefef" />
    {range(-46, 258, 2).map((m) => {
      const len = m % 20 === 0 ? 19 : m % 10 === 0 ? 7 : 4;
      return <rect key={m} x={51 - len} y={Math.floor(Y0 + m * MM)} width={len} height="1" fill="#3c3c3c" />;
    })}
    {range(-40, 240, 20).map((m) => (
      <text key={m} transform={`translate(43 ${Math.floor(Y0 + m * MM) + 4}) rotate(-90)`} textAnchor="end" {...rulerFont}>{m}</text>
    ))}
    <rect x="32" y="149" width="19" height="1" fill="#f00000" />
  </svg>
);

/* ---------- map ---------- */
/* [label, point x, point y, label x, label baseline] in thirds of a pixel, per map tile origin */
const tiles = [
  { ox: 800, oy: 310, pts: [
    ["4", 794, 82, 795, 73], ["5", 798, 96, 799, 119], ["6", 662, 207, 665, 199], ["7", 674, 219, 668, 245], ["10", 696, 213, 698, 205],
    ["8", 598, 293, 600, 286], ["9", 583, 324, 585, 332], ["12", 751, 366, 753, 358], ["11", 732, 388, 735, 411], ["16", 695, 402, 682, 395],
    ["13", 458, 419, 460, 410], ["14", 320, 532, 307, 524], ["17", 356, 535, 345, 527], ["25", 377, 536, 378, 527], ["19", 335, 554, 337, 577],
    ["15", 243, 609, 245, 601], ["21", 327, 626, 328, 618], ["18", 536, 595, 538, 586], ["20", 634, 625, 636, 617], ["28", 241, 650, 212, 646],
    ["23", 257, 623, 259, 647], ["24", 239, 660, 236, 689], ["29", 278, 693, 279, 685], ["27", 356, 670, 357, 662], ["22", 389, 722, 390, 713],
    ["26", 116, 741, 117, 733], ["30", 213, 757, 214, 748],
  ] },
  { ox: 740, oy: 550, pts: [
    ["31", 333, 138, 335, 130], ["33", 162, 129, 149, 121], ["32", 198, 127, 200, 119], ["34", 170, 140, 172, 163], ["35", 168, 214, 169, 206],
    ["36", 97, 206, 98, 198], ["38", 80, 213, 55, 205], ["37", 87, 237, 88, 259], ["40", 63, 247, 34, 243], ["39", 205, 254, 206, 247],
    ["41", 272, 276, 274, 268], ["42", 235, 309, 236, 318], ["70", 434, 307, 436, 298], ["68", 407, 318, 393, 311], ["69", 476, 388, 477, 380],
    ["66", 898, 190, 899, 183], ["67", 967, 289, 969, 281], ["44", 26, 363, 27, 355], ["43", 146, 443, 147, 435], ["65", 457, 489, 459, 481],
    ["64", 428, 521, 430, 530], ["63", 586, 498, 587, 490], ["71", 605, 561, 602, 553], ["72", 632, 589, 634, 581], ["73", 723, 672, 725, 664],
  ] },
  { ox: 440, oy: 580, pts: [
    ["48", 806, 208, 808, 199], ["45", 855, 252, 857, 244], ["47", 735, 371, 710, 363], ["62", 779, 351, 781, 343], ["46", 759, 364, 761, 391],
    ["49", 658, 444, 660, 437], ["50", 641, 447, 617, 440], ["52", 650, 464, 651, 487], ["61", 632, 492, 604, 488], ["51", 729, 451, 730, 443],
    ["60", 767, 478, 768, 470], ["54", 829, 514, 830, 506], ["53", 806, 534, 782, 527], ["55", 843, 546, 844, 541], ["58", 516, 575, 517, 567],
    ["56", 569, 593, 571, 584], ["57", 690, 671, 692, 662], ["59", 438, 659, 440, 650], ["4", 136, 462, 138, 452], ["5", 198, 445, 200, 438],
    ["3", 230, 489, 216, 480], ["2", 230, 489, 232, 514],
  ] },
];
const points = tiles.flatMap((t) => t.pts.map(([n, x, y, lx, ly]) => ({ n, x: t.ox + x / 3, y: t.oy + y / 3, lx: t.ox + lx / 3, ly: t.oy + ly / 3 })));

const grass = [];
for (let k = 0; k <= 16; k++) {
  const y = 326.9 + 28.46 * k;
  const left = y <= 728.3 ? 506 + (728.3 - y) / 1.0042 : 506 + (y - 728.3) * 1.1204;
  const right = y < 379 ? 965 + (y - 325.3) * 1.037 : 586 + (799.7 - y) / 0.9678;
  for (let n = -20; n < 8; n++) {
    const x = 897 + 28.5 * n + (k % 2 ? 0 : 14.25);
    if (x > left + 1 && x < right + 2 && !(k === 0 && x > 950)) grass.push([x, y]);
  }
}
const handles = [[455.5, 325.5], [784.5, 325.5], [1113.5, 325.5], [455.5, 563.5], [1113.5, 563.5], [455.5, 802.5], [784.5, 802.5], [1113.5, 802.5]];

const MapSheet = () => (
  <svg width="858" height="607" viewBox="358 265 858 607" fill="none" fontFamily="Open Sans, sans-serif">
    <defs><clipPath id="frame"><rect x="455" y="325" width="669" height="488" /></clipPath></defs>
    <g clipPath="url(#frame)">
      {grass.map(([x, y], i) => (
        <path key={i} transform={`translate(${Math.round(x)} ${Math.round(y)})`} d="M-3-2.500h1.500M1-2.500h2M-2.500-2.500L.3 1.500M2.300-2.500L-2 2.800M-3 2.500h3.500M1.800 2.500h1.500" stroke="#4a4a4a" strokeWidth=".85" />
      ))}
      {[404.5, 548.5, 692.5].flatMap((y) => [548.5, 692.5, 837.5, 981.5].map((x) => (
        <path key={x + "/" + y} d={`M${x - 8.5} ${y}h17M${x} ${y - 8.500}v17`} stroke="#4fae4a" />
      )))}
      <path d="M907.300 325.300L506 728.300 586 799.700 1020.700 379 965 325.300" stroke="#1a1a1a" strokeWidth="1.200" />
      <path d="M1051 325L1065 337.500" stroke="#c99d8b" strokeWidth=".8" />
      <circle cx="691.500" cy="723" r="11" stroke="#c9917a" strokeWidth=".9" />
      <path d="M674.500 697.700A5.500 5.500 0 0 0 667.700 706.700" stroke="#c9917a" strokeWidth=".9" />
      {points.map((p, i) => <circle key={i} cx={p.x + 0.2} cy={p.y + 0.2} r="2.700" fill="#8d74ad" stroke="#35303c" strokeWidth="1" />)}
      {points.map((p, i) => <text key={i} x={p.lx - 0.3} y={p.ly} fontSize="9.500" letterSpacing="-.35" fill="#000" stroke="#000" strokeWidth=".15">{p.n}</text>)}
    </g>
    <g shapeRendering="crispEdges">
      <path d="M455 324.500h669" stroke="#555" strokeDasharray="3 1.500" />
      <path d="M455 325.500h669M455.500 325v488M1123.500 325v488M455 812.500h669" stroke="#2f86bd" />
      <path d="M455.500 325v488M1123.500 325v488M455 812.500h669" stroke="#4d0f38" strokeDasharray="4 2" />
      {handles.map(([x, y]) => <rect key={x + ":" + y} x={x} y={y} width="10" height="10" fill="#fff" stroke="#2f86bd" />)}
    </g>
    <text x="702.5 711.3 718.3 722.3 730.5 738 742.5" y="840" fontSize="11.500" fill="#111">02.55 m</text>
    <g shapeRendering="crispEdges"><rect x="706.500" y="848.500" width="29" height="9" fill="#fff" stroke="#111" /><rect x="706" y="848" width="15" height="10" fill="#000" /></g>
    <text x="964.300" y="821.500" fontSize="9.500" fill="#111" letterSpacing="-.1">ппппо</text>
  </svg>
);

/* ---------- form parts ---------- */
const Arrows = ({ off, low }) => (
  <svg width="8" height="13" viewBox="0 0 8 13"><path d="M.3 4.600h7.400L4 .5z" fill={off ? "#999" : "#555"} /><path d="M.3 8.400h7.400L4 12.500z" fill={off || low ? "#b4b4b4" : "#555"} /></svg>
);
const Spin = ({ w, v, clear, off, low }) => (
  <SpinFrame $w={w} $off={off}><SpinValue>{v}{clear && <Clear />}</SpinValue><SpinArrows><Arrows off={off} low={low} /></SpinArrows></SpinFrame>
);
const Select = ({ w, v, off }) => <Combo $w={w} $off={off}>{v}<Down c={off ? "#aaa" : "#555"} /></Combo>;

const items = [
  { name: "ппм", icon: <svg width="14" height="12" viewBox="0 0 14 12" fill="none"><rect x=".5" y=".5" width="13" height="11" fill="#f3f3f3" stroke="#8a8a8a" /><path d="M4 4V2.500h6V4M7 2.500v7M5.500 9.500h3" stroke="#444" strokeWidth="1.200" /></svg> },
  { name: "<Scalebar>", icon: <svg width="14" height="4" viewBox="0 0 14 4"><rect width="14" height="4" fill="#4a4a4a" /><rect x="5" y="1" width="4" height="2" fill="#eee" /></svg> },
  { name: "Карта 1", on: true, icon: <svg width="14" height="13" viewBox="0 0 14 13" fill="none"><rect x=".5" y=".8" width="13" height="11.700" fill="#a3c3e2" stroke="#6c93b8" /><path d="M3 1v11" stroke="#6c93b8" /></svg> },
];

const Bar = ({ set }) => Object.entries(set).map(([k, icon]) => <Tool key={k}>{icon}</Tool>);
const pick = (o, ks) => Object.fromEntries(ks.map((k) => [k, o[k]]));

export default function App() {
  return (
    <Window>
      <Global />
      <TitleBar>
        <svg width="16" height="17" viewBox="0 0 16 17" fill="none">
          <circle cx="7.500" cy="8.500" r="5.700" stroke="#6aa637" strokeWidth="3.400" />
          <path d="M8 8.500l3.500 0 4 4.500-.3 3-3 0-4-4.500z" fill="#8cbb40" stroke="#fff" strokeWidth=".5" />
          <path d="M7 8l4 0-4 4z" fill="#ee7f2b" />
        </svg>
        <TitleText>*111</TitleText>
        <Caption>
          <CaptionButton><svg width="10" height="10"><path d="M0 5.500h10" stroke="#222" /></svg></CaptionButton>
          <CaptionButton><svg width="10" height="10" fill="none"><path d="M.5 2.500h7v7h-7zM2.500 2.500v-2h7v7h-2" stroke="#222" /></svg></CaptionButton>
          <CaptionButton><svg width="10" height="10"><path d="M0 0l10 10M10 0L0 10" stroke="#222" strokeWidth="1.100" /></svg></CaptionButton>
        </Caption>
      </TitleBar>
      <MenuBar>
        <MenuItem $w={34} $u>Макет</MenuItem>
        <MenuItem $w={40} $u>Правка</MenuItem>
        <MenuItem $w={20} $u>Вид</MenuItem>
        <MenuItem $w={29} $u>Items</MenuItem>
        <MenuItem $w={95} $ls={-0.4} $u>Добавить Объект</MenuItem>
        <MenuItem $w={32}>Атлас</MenuItem>
        <MenuItem $w={65}>Параметры</MenuItem>
      </MenuBar>
      <ToolBar $h={38} $pb={1}>
        <Grip $w={8.5} />
        <Bar set={pick(tools1, ["save"])} />
        <Separator />
        <Bar set={pick(tools1, ["newLayout", "duplicate", "manager", "open", "saveTpl"])} />
        <Separator />
        <Bar set={pick(tools1, ["addPage"])} />
        <Separator />
        <Bar set={pick(tools1, ["print", "image", "svg", "pdf", "undo", "redo"])} />
        <Grip $w={16} $end />
        <Bar set={tools2} />
        <PageCombo><PageComboValue>1</PageComboValue><PageComboArrow><Down c="#9a9a9a" /></PageComboArrow></PageCombo>
        <Bar set={tools3} />
      </ToolBar>
      <ToolBar $h={30}>
        <Grip $w={8.5} />
        <Bar set={zoomTools} />
        <Grip $w={16} $end />
        <Bar set={arrangeTools} />
      </ToolBar>
      <Body>
        <ToolBox>
          <SideGrip />
          {sideTools.map((icon, i) => <SideTool key={i} $on={i === 3}>{icon}</SideTool>)}
        </ToolBox>
        <Stage>
          <Corner />
          <HRuler />
          <VRuler />
          <Canvas><Paper><MapSheet /></Paper></Canvas>
        </Stage>
        <DockHandle />
        <Dock>
          <Tabs $h={24} $mt={1}>
            <Tab $w={75} $on $first>Элементы</Tab>
            <Tab $w={86}>Undo History</Tab>
          </Tabs>
          <DockTitle $h={20} $ls={-0.2}><Grow>Элементы</Grow><Float /><CloseIcon /></DockTitle>
          <Table>
            <TableHead>
              <HeadCell $pl={3}><svg width="16" height="12" viewBox="0 0 16 12" fill="none"><path d="M.5 6C4 1.500 11 1.500 15.500 6 11 10.500 4 10.500.5 6z" fill="#e4e4e4" stroke="#999" /><circle cx="7.500" cy="6" r="3" fill="#888" /><circle cx="7.500" cy="6" r="1.300" fill="#333" /><path d="M1 4C5-.5 11-.5 15 4" stroke="#bbb" /></svg></HeadCell>
              <HeadCell $pl={4}><svg width="13" height="16" viewBox="0 0 13 16" fill="none"><path d="M3 8V5a3.500 3.500 0 0 1 7 0v3" stroke="#8c8c8c" strokeWidth="1.600" /><rect x=".5" y="7.500" width="12" height="8" rx="1" fill="#666" /></svg></HeadCell>
              <HeadCell $pl={2} $last>Элемент</HeadCell>
            </TableHead>
            {items.map((it) => (
              <ItemRow key={it.name} $on={it.on}><Box><Check /></Box><Box />{it.icon}<ItemName>{it.name}</ItemName></ItemRow>
            ))}
          </Table>
          <Splitter />
          <Tabs $h={24} $mt={-1}>
            <Tab $w={56} $first>Макет</Tab>
            <Tab $w={123} $on>Свойства элемента</Tab>
            <Tab $w={102}>Направляющие</Tab>
          </Tabs>
          <DockTitle $h={20} $ls={-0.2}><Grow>Свойства элемента</Grow><Float /><CloseIcon /></DockTitle>
          <BackRow>
            <BackButton><svg width="11" height="15" viewBox="0 0 11 15"><path d="M10.300 .7v13.600L.7 7.500z" fill="#6f9fd0" stroke="#3f658c" /></svg></BackButton>
            <BackText>Map Grid Properties</BackText>
          </BackRow>
          <ScrollArea>
            <Scrolled>
              <CheckLine><Box><Check /></Box><CheckText>Grid enabled</CheckText><Override /></CheckLine>
              <GroupHead $h={24} $pt={2}><Fold />Внешний вид</GroupHead>
              <Group $h={325}>
                <Row $h={22} $mb={6}><Label $w={160}>Вид сетки</Label><Select w={189} v="Перекрестие" /></Row>
                <Row $h={21} $mb={6}><Label $w={160} $pt={0}>Система координат</Label><Button $w={189} $h={21}>EPSG:32637</Button></Row>
                <Row $h={22} $mb={9}><Label $w={160}>Interval</Label><Select w={189} v="Map Unit" /></Row>
                <Row $h={20} $mb={12}><Label $w={23} $pl={10}>X</Label><Spin w={290} v="25.000000000000" clear /><Push $w={9} /><Override /></Row>
                <Row $h={20} $mb={12}><Label $w={23} $pl={10}>Y</Label><Spin w={290} v="25.000000000000" clear /><Push $w={9} /><Override /></Row>
                <Row $h={52} $mb={12}>
                  <Label $w={160}>Смещение</Label>
                  <Stack>
                    <Line><Spin w={153} v="X 0.000000000000" low /><Push $w={9} /><Override /></Line>
                    <Line><Spin w={153} v="Y0.000000000000" low /><Push $w={9} /><Override /></Line>
                  </Stack>
                </Row>
                <Row $h={20} $mb={9}><Label $w={160}>Размер перекрестия</Label><Spin w={153} v="3.00 мм" /><Push $w={9} /><Override /></Row>
                <Row $h={27} $mb={6}><Label $w={160} $pt={0}>Стиль линии</Label><Swatch $w={177} $h={27}><GreenLine /></Swatch><Drop $w={12} $h={27}><Down /></Drop></Row>
                <Row $h={22}><Label $w={160}>Режим смешивания</Label><Select w={189} v="Обычный" /></Row>
              </Group>
              <GroupHead $h={18} $pb={1}><Fold />Рамка</GroupHead>
              <Group $h={260}>
                <Row $h={22} $mb={9}><Label $w={105}>Стиль рамки</Label><Select w={244} v="No Frame" /></Row>
                <Row $off $h={20} $mb={12}><Label $w={105}>Размер рамки</Label><Spin w={208} v="2.00 мм" off /><Push $w={9} /><Override /></Row>
                <Row $off $h={20} $mb={11}><Label $w={105}>Frame margin</Label><Spin w={208} v="0.00 мм" off low /><Push $w={9} /><Override /></Row>
                <Row $off $h={22} $mb={8}><Label $w={105}>Толщина рамки</Label><Spin w={88} v="0.30 мм" off /><Push $w={9} /><Override /><Push $w={9} /><Swatch $off $w={102}><SwatchFill /></Swatch><Drop $off $w={12}><Down c="#aaa" /></Drop></Row>
                <Row $off $h={22} $mb={6}><Label $w={105}>Frame fill colors</Label><Swatch $off $w={112} /><Drop $off $w={12}><Down c="#aaa" /></Drop><Push $w={6} /><Swatch $off $w={102}><SwatchFill /></Swatch><Drop $off $w={12}><Down c="#aaa" /></Drop></Row>
                <Row $off $h={22} $mb={6}><Label $w={105}>Разделение слева</Label><Select w={244} v="Все" off /></Row>
                <Row $off $h={22} $mb={6}><Label $w={105}>Разделение справа</Label><Select w={244} v="Все" off /></Row>
                <Row $off $h={22}><Label $w={105}>Разделение сверху</Label><Select w={244} v="Все" off /></Row>
              </Group>
            </Scrolled>
            <Scrollbar>
              <ScrollStep><svg width="8" height="5"><path d="M0 4.700h8L4 .4z" fill="#555" /></svg></ScrollStep>
              <ScrollThumb />
              <ScrollTrack />
              <ScrollStep $bottom><Down /></ScrollStep>
            </Scrollbar>
          </ScrollArea>
        </Dock>
      </Body>
      <StatusBar>
        <Status $w={106}>x: -15.5874 мм</Status>
        <Status $w={106}>y: -40.1809 мм</Status>
        <Status $w={106}>лист: 1</Status>
        <ZoomBox><ZoomValue>76.4%</ZoomValue><ZoomArrow><Down /></ZoomArrow></ZoomBox>
        <Slider><SliderDone /><SliderKnob /><SliderRest /></Slider>
      </StatusBar>
    </Window>
  );
}
